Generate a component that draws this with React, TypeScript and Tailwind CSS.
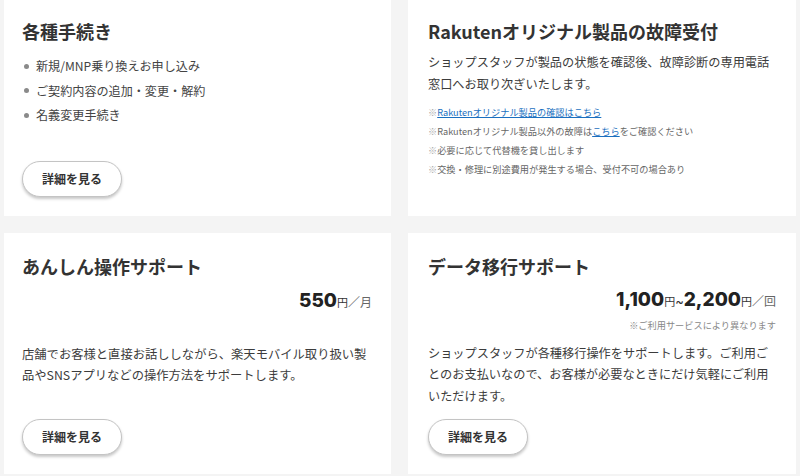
import React from "react";

const jp = { fontFamily: '"Noto Sans CJK JP", "Noto Sans", sans-serif' };

function DetailButton() {
  return (
    <button className="mt-auto w-[100px] h-[36px] rounded-full border border-[#c4c4c4] bg-white shadow-[0_2px_3px_rgba(0,0,0,0.22)] text-[12px] font-bold text-[#333] flex items-center justify-center">
      詳細を見る
    </button>
  );
}

function Price({ children }: { children: React.ReactNode }) {
  return (
    <div className="flex justify-end items-baseline text-[#222]" style={{ fontFamily: 'Inter, "Noto Sans CJK JP", sans-serif' }}>
      {children}
    </div>
  );
}

export default function App() {
  return (
    <div className="w-[800px] h-[476px] bg-[#f4f4f4] overflow-hidden" style={jp}>
      <div className="grid grid-cols-[387px_388px] grid-rows-[216px_241px] gap-x-[17px] gap-y-[17px] px-[4px]">
        {/* Card 1 */}
        <div className="bg-white flex flex-col pl-[18px] pr-[18px] pt-[19px] pb-[19px]">
          <h2 className="text-[18px] leading-[24px] font-bold text-[#333]">各種手続き</h2>
          <ul className="mt-[13px] flex flex-col gap-[4.5px] text-[12.1px] leading-[20px] text-[#444]">
            {["新規/MNP乗り換えお申し込み", "ご契約内容の追加・変更・解約", "名義変更手続き"].map((t) => (
              <li key={t} className="flex items-center">
                <span className="w-[5px] h-[5px] rounded-full bg-[#8a8a8a] ml-[2px] mr-[7px]" />
                {t}
              </li>
            ))}
          </ul>
          <DetailButton />
        </div>

        {/* Card 2 */}
        <div className="bg-white flex flex-col pl-[20px] pr-[18px] pt-[19px] pb-[19px]">
          <h2 className="text-[18px] leading-[24px] font-bold text-[#333]">Rakutenオリジナル製品の故障受付</h2>
          <p className="mt-[8px] text-[12.2px] leading-[22px] text-[#3c3c3c] break-all">
            ショップスタッフが製品の状態を確認後、故障診断の専用電話窓口へお取り次ぎいたします。
          </p>
          <div className="mt-[8px] flex flex-col text-[9.2px] leading-[19px] text-[#666]">
            <p>
              <span className="text-[#aaa]">※</span>
              <span className="text-[#1a6fc0] underline">Rakutenオリジナル製品の確認はこちら</span>
            </p>
            <p>
              <span className="text-[#aaa]">※</span>Rakutenオリジナル製品以外の故障は
              <span className="text-[#1a6fc0] underline">こちら</span>をご確認ください
            </p>
            <p>
              <span className="text-[#aaa]">※</span>必要に応じて代替機を貸し出します
            </p>
            <p>
              <span className="text-[#aaa]">※</span>交換・修理に別途費用が発生する場合、受付不可の場合あり
            </p>
          </div>
        </div>

        {/* Card 3 */}
        <div className="bg-white flex flex-col pl-[18px] pr-[19px] pt-[21px] pb-[19px]">
          <h2 className="text-[18px] leading-[24px] font-bold text-[#333]">あんしん操作サポート</h2>
          <div className="mt-[12px]">
            <Price>
              <span className="text-[19px] leading-[22px] font-extrabold">550</span>
              <span className="text-[11px] text-[#333]" style={jp}>円</span>
              <span className="text-[12px] text-[#666]" style={jp}>／月</span>
            </Price>
          </div>
          <p className="mt-[32px] text-[12.3px] leading-[21px] text-[#3c3c3c] break-all">
            店舗でお客様と直接お話ししながら、楽天モバイル取り扱い製品やSNSアプリなどの操作方法をサポートします。
          </p>
          <DetailButton />
        </div>

        {/* Card 4 */}
        <div className="bg-white flex flex-col pl-[20px] pr-[20px] pt-[21px] pb-[19px]">
          <h2 className="text-[18px] leading-[24px] font-bold text-[#333]">データ移行サポート</h2>
          <div className="mt-[11px]">
            <Price>
              <span className="text-[19px] leading-[22px] font-extrabold">1,100</span>
              <span className="text-[11px] text-[#333]" style={jp}>円</span>
              <span className="text-[13px] text-[#333]">~</span>
              <span className="text-[19px] leading-[22px] font-extrabold">2,200</span>
              <span className="text-[11px] text-[#333]" style={jp}>円</span>
              <span className="text-[12px] text-[#666]" style={jp}>／回</span>
            </Price>
          </div>
          <p className="mt-[5px] text-right text-[9.2px] leading-[16px] text-[#888]">※ご利用サービスにより異なります</p>
          <div className="mt-[10px] text-[12.2px] leading-[21.5px] text-[#3c3c3c]">
            <span className="block whitespace-nowrap">ショップスタッフが各種移行操作をサポートします。ご利用ご</span>
            <span className="block whitespace-nowrap">とのお支払いなので、お客様が必要なときにだけ気軽にご利用</span>
            <span className="block whitespace-nowrap">いただけます。</span>
          </div>
          <DetailButton />
        </div>
      </div>
    </div>
  );
}
